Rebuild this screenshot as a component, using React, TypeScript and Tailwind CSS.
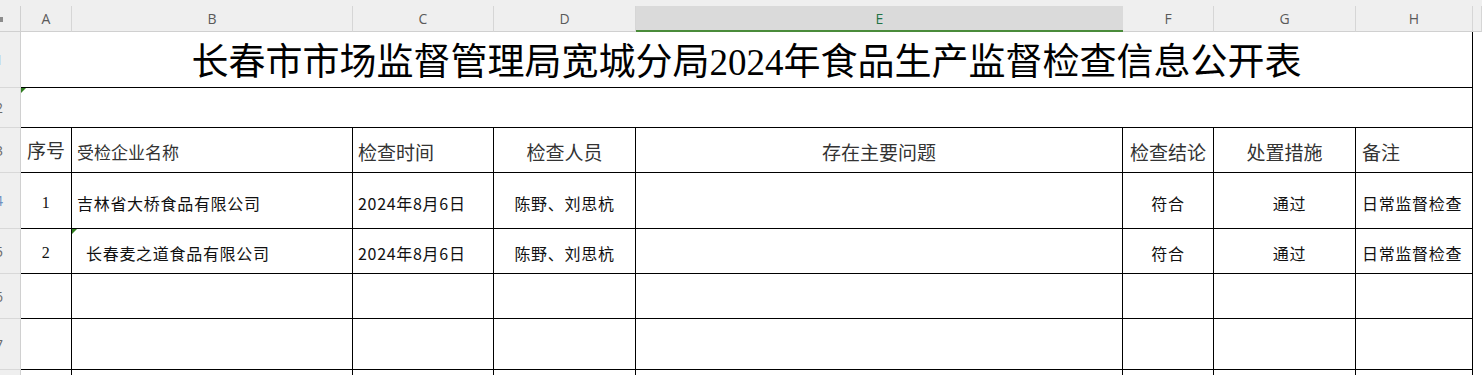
const cols = ["", "A", "B", "C", "D", "E", "F", "G", "H", ""];

const cjk = "font-['Noto_Sans_CJK_SC',sans-serif]";

const rowHead =
  "bg-[#efefef] border-r border-r-[#d0d0d0] border-b border-b-[#d8d8d8] overflow-hidden flex items-center";

const cell =
  "border-r border-b border-black flex items-center pt-[4px] text-[16px] tracking-[0.7px] text-[#111]";

function RowLabel({ n, blue }: { n: number; blue?: boolean }) {
  return (
    <div className={rowHead}>
      <div
        className={`-ml-[17px] w-[32px] shrink-0 text-center text-[14px] font-['Open_Sans',sans-serif] ${
          blue ? "text-[#6f8fbf]" : "text-[#6b6b6b]"
        }`}
      >
        {n}
      </div>
    </div>
  );
}

function Tri() {
  return (
    <div className="absolute left-0 top-0 w-0 h-0 border-t-[5px] border-r-[5px] border-t-[#2f7d1f] border-r-transparent" />
  );
}

const rows = [
  {
    no: "1",
    name: "吉林省大桥食品有限公司",
    pad: "pl-[5px]",
    mark: false,
    h: "h-[56px]",
  },
  {
    no: "2",
    name: "长春麦之道食品有限公司",
    pad: "pl-[14px]",
    mark: true,
    h: "h-[45px]",
  },
];

export default function App() {
  return (
    <div className={`w-[1482px] h-[375px] overflow-hidden bg-white ${cjk}`}>
      <div className="grid grid-cols-[21px_51px_281px_141px_142px_487px_91px_142px_117px_1fr]">
        {/* column header */}
        {cols.map((c, i) => (
          <div key={i} className="h-[32px] bg-[#efefef] pt-[6px]">
            {i === 0 ? (
              <div className="h-full border-r border-r-[#d0d0d0] border-b border-b-[#d0d0d0] pt-[11px]">
                <div className="w-[3px] h-[5px] bg-[#8c8c8c]" />
              </div>
            ) : c === "E" ? (
              <div className="h-full bg-[#dadada] border-b-2 border-b-[#4a8b3a] flex items-center justify-center text-[14px] text-[#217346] font-['Open_Sans',sans-serif]">
                {c}
              </div>
            ) : (
              <div className="h-full border-r border-r-[#d6d6d6] border-b border-b-[#d0d0d0] flex items-center justify-center text-[14px] text-[#5a5a5a] font-['Open_Sans',sans-serif]">
                {c}
              </div>
            )}
          </div>
        ))}

        {/* row 1: title */}
        <RowLabel n={1} />
        <div className="col-span-8 h-[56px] border-r border-b border-black flex items-center justify-center pt-[6px] text-[37px] text-black font-['Liberation_Serif','Noto_Sans_CJK_SC',serif]">
          长春市市场监督管理局宽城分局2024年食品生产监督检查信息公开表
        </div>
        <div />

        {/* row 2: blank merged */}
        <RowLabel n={2} />
        <div className="relative col-span-8 h-[40px] border-r border-b border-black">
          <Tri />
        </div>
        <div />

        {/* row 3: headings */}
        <RowLabel n={3} />
        <div className={`${cell} h-[45px] justify-center text-[19px] tracking-normal text-[#333] font-['Liberation_Serif','Noto_Sans_CJK_SC',serif]`}>
          序号
        </div>
        <div className={`${cell} pl-[5px] text-[17px] tracking-normal text-[#333]`}>受检企业名称</div>
        <div className={`${cell} pl-[5px] text-[19px] tracking-normal text-[#333]`}>检查时间</div>
        <div className={`${cell} justify-center text-[19px] tracking-normal text-[#333]`}>检查人员</div>
        <div className={`${cell} justify-center text-[19px] tracking-normal text-[#333]`}>存在主要问题</div>
        <div className={`${cell} justify-center text-[19px] tracking-normal text-[#333]`}>检查结论</div>
        <div className={`${cell} justify-center text-[19px] tracking-normal text-[#333]`}>处置措施</div>
        <div className={`${cell} pl-[6px] text-[19px] tracking-normal text-[#333]`}>备注</div>
        <div />

        {/* data rows */}
        {rows.map((r, i) => (
          <div key={r.no} className="contents">
            <RowLabel n={4 + i} blue={i === 0} />
            <div className={`${cell} ${r.h} justify-center font-['Liberation_Serif',serif]`}>{r.no}</div>
            <div className={`${cell} ${r.pad} relative`}>
              {r.mark && <Tri />}
              {r.name}
            </div>
            <div className={`${cell} pl-[5px] tracking-[0.3px]`}>2024年8月6日</div>
            <div className={`${cell} justify-center`}>陈野、刘思杭</div>
            <div className={cell} />
            <div className={`${cell} justify-center`}>符合</div>
            <div className={`${cell} justify-center pl-[10px]`}>通过</div>
            <div className={`${cell} pl-[6px]`}>日常监督检查</div>
            <div />
          </div>
        ))}

        {/* empty rows */}
        {[
          { n: 6, h: "h-[45px]" },
          { n: 7, h: "h-[51px]" },
          { n: 8, h: "h-[40px]" },
        ].map((r) => (
          <div key={r.n} className="contents">
            <RowLabel n={r.n} />
            <div className={`${cell} ${r.h}`} />
            <div className={cell} />
            <div className={cell} />
            <div className={cell} />
            <div className={cell} />
            <div className={cell} />
            <div className={cell} />
            <div className={cell} />
            <div />
          </div>
        ))}
      </div>
    </div>
  );
}
